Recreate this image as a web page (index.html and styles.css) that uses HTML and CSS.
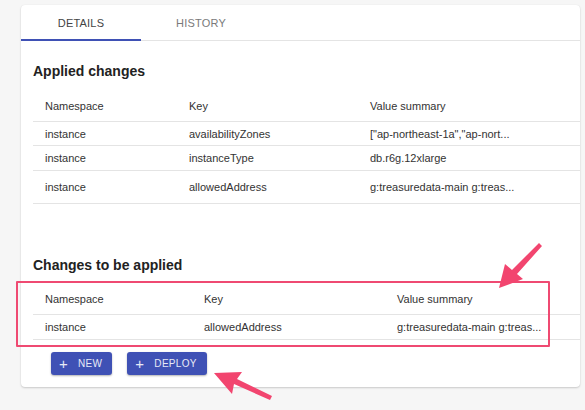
FILE: index.html
```html
<!DOCTYPE html>
<html>
<head>
<meta charset="utf-8">
<link rel="stylesheet" href="styles.css">
</head>
<body>
<div class="page">
  <div class="card">
    <div class="tabs">
      <div class="tab active">Details</div>
      <div class="tab">History</div>
    </div>
    <div class="content">
      <h2 class="heading">Applied changes</h2>
      <div class="table t1">
        <div class="row head"><div>Namespace</div><div>Key</div><div>Value summary</div></div>
        <div class="row r24"><div>instance</div><div>availabilityZones</div><div>["ap-northeast-1a","ap-nort...</div></div>
        <div class="row r25"><div>instance</div><div>instanceType</div><div>db.r6g.12xlarge</div></div>
        <div class="row r33"><div>instance</div><div>allowedAddress</div><div>g:treasuredata-main g:treas...</div></div>
      </div>
      <h2 class="heading h2">Changes to be applied</h2>
      <div class="marked">
        <div class="table t2">
          <div class="row head2"><div>Namespace</div><div>Key</div><div>Value summary</div></div>
          <div class="row r25"><div>instance</div><div>allowedAddress</div><div>g:treasuredata-main g:treas...</div></div>
        </div>
        <div class="highlight"></div>
      </div>
      <div class="actions">
        <button class="btn"><span class="plus">+</span>New</button>
        <button class="btn"><span class="plus">+</span>Deploy</button>
      </div>
    </div>
  </div>
  <svg class="arrow arrow-a" width="60" height="60" viewBox="0 0 60 60">
    <path d="M41 2 L44 5 L19 33 L25 38 L1 47 L7 23 L14 29 Z" fill="#f2456f"/>
  </svg>
  <svg class="arrow arrow-b" width="70" height="40" viewBox="0 0 70 40">
    <path d="M2 3 L30 2 L25 9 L60 26 L58 30 L22 14 L20 24 Z" fill="#f2456f"/>
  </svg>
</div>
</body>
</html>
```
FILE: styles.css
```css
* { box-sizing: border-box; }
html, body { margin: 0; padding: 0; }
body {
  background: #f6f6f6;
  font-family: "Liberation Sans", Arial, sans-serif;
  color: #333;
  width: 585px;
  height: 410px;
  overflow: hidden;
}
.page { position: relative; padding: 5px 5px 0 21px; }
.card {
  background: #fff;
  border-radius: 4px;
  box-shadow: 0 1px 2px rgba(0,0,0,0.18), 0 0 1px rgba(0,0,0,0.08);
  width: 559px;
  padding-bottom: 12px;
}
.tabs {
  display: flex;
  height: 36px;
  border-bottom: 1px solid #e4e4e4;
}
.tab {
  width: 120px;
  display: flex;
  align-items: center;
  justify-content: center;
  font-size: 11px;
  text-transform: uppercase;
  letter-spacing: 0.2px;
  color: #7a7a7a;
  padding-top: 1px;
}
.tab.active {
  color: #444;
  border-bottom: 2px solid #3f51b5;
  margin-bottom: -1px;
}
.content { padding: 0 0 0 12px; }
.heading {
  margin: 0;
  padding-top: 20px;
  font-size: 14px;
  line-height: 20px;
  font-weight: bold;
  color: #222;
}
.h2 { padding-top: 51px; }
.table { font-size: 11px; color: #333; }
.t1 { margin-top: 10px; }
.row {
  display: grid;
  align-items: center;
  border-bottom: 1px solid #e4e4e4;
}
.t1 .row { grid-template-columns: 144px 181px 1fr; }
.t2 .row { grid-template-columns: 159px 193px 1fr; }
.row > div { padding-left: 12px; white-space: nowrap; }
.head { height: 31px; }
.head2 { height: 32px; }
.r24 { height: 24px; }
.r25 { height: 25px; }
.r33 { height: 33px; }
.marked { position: relative; margin-top: 8px; }
.highlight {
  position: absolute;
  left: -17px;
  top: -2px;
  width: 534px;
  height: 66px;
  border: 2px solid #ef4a72;
  border-radius: 1px;
}
.actions {
  display: flex;
  gap: 15px;
  padding: 12px 0 0 18px;
}
.btn {
  height: 23px;
  border: none;
  border-radius: 3px;
  background: #3f51b5;
  color: #e8eaf6;
  font-family: "Liberation Sans", Arial, sans-serif;
  font-size: 10px;
  text-transform: uppercase;
  letter-spacing: 0.3px;
  display: flex;
  align-items: center;
  padding: 0 10px 0 8px;
  box-shadow: 0 1px 2px rgba(0,0,0,0.3);
}
.plus { font-size: 15px; margin-right: 10px; line-height: 1; }
.arrow { position: absolute; }
.arrow-a { left: 498px; top: 241px; }
.arrow-b { left: 212px; top: 370px; }
```
